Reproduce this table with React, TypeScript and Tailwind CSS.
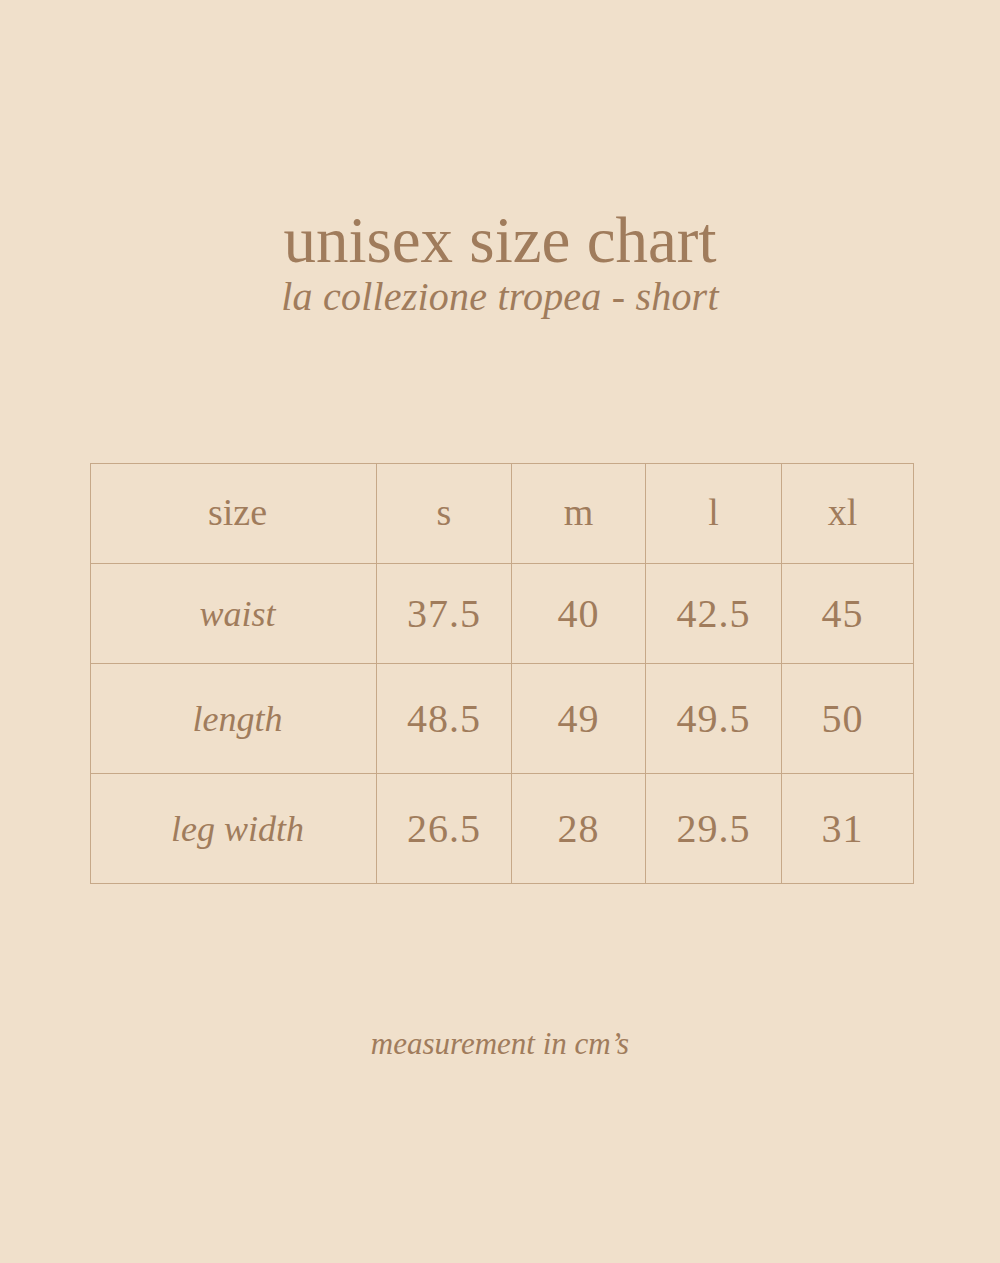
import React from "react";

const serif = { fontFamily: '"Liberation Serif", "Times New Roman", serif' };

const cols = ["w-[286px]", "w-[135px]", "w-[134px]", "w-[136px]", "w-[132px]"];

const rows: { label: string; vals: string[]; h: string }[] = [
  { label: "waist", vals: ["37.5", "40", "42.5", "45"], h: "h-[100px]" },
  { label: "length", vals: ["48.5", "49", "49.5", "50"], h: "h-[110px]" },
  { label: "leg width", vals: ["26.5", "28", "29.5", "31"], h: "h-[110px]" },
];

export default function App() {
  return (
    <div
      className="w-[1000px] h-[1263px] bg-[#f0e0cb] text-[#a07c5c] flex flex-col items-center"
      style={serif}
    >
      <div className="pt-[205px] flex flex-col items-center">
        <div className="text-[65px] leading-[70px] tracking-[0px]">unisex size chart</div>
        <div className="text-[40px] leading-[44px] italic tracking-[0.2px] mt-[0px]">
          la collezione tropea - short
        </div>
      </div>

      <div className="mt-[144px] ml-[4px] flex flex-col border-l border-t border-[#c6a888]">
        <div className="flex h-[100px]">
          {["size", "s", "m", "l", "xl"].map((t, i) => (
            <div
              key={t}
              className={`${cols[i]} border-r border-b border-[#c6a888] flex items-center justify-center text-[38px] pb-[2px] ${i === 0 ? "pl-[8px]" : ""} ${i === 4 ? "pr-[10px]" : ""}`}
            >
              {t}
            </div>
          ))}
        </div>
        {rows.map((r) => (
          <div key={r.label} className={`flex ${r.h}`}>
            <div
              className={`${cols[0]} border-r border-b border-[#c6a888] flex items-center justify-center text-[36px] italic pl-[8px]`}
            >
              {r.label}
            </div>
            {r.vals.map((v, i) => (
              <div
                key={i}
                className={`${cols[i + 1]} border-r border-b border-[#c6a888] flex items-center justify-center text-[40px] tracking-[1px] ${i === 3 ? "pr-[10px]" : ""}`}
              >
                {v}
              </div>
            ))}
          </div>
        ))}
      </div>

      <div className="mt-[137px] text-[31px] italic tracking-[0px]">measurement in cm&rsquo;s</div>
    </div>
  );
}
